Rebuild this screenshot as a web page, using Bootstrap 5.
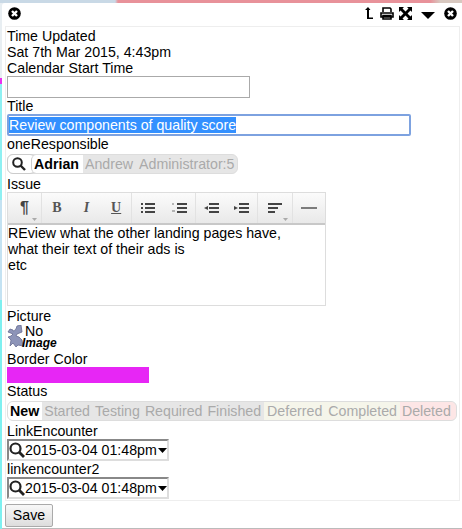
<!DOCTYPE html>
<html lang="en">
<head>
    <meta charset="UTF-8">
    <meta name="viewport" content="width=device-width, initial-scale=1">
    <link href="https://cdn.jsdelivr.net/npm/bootstrap@5.3.2/dist/css/bootstrap.min.css" rel="stylesheet">
    <script src="https://cdn.jsdelivr.net/npm/bootstrap@5.3.2/dist/js/bootstrap.bundle.min.js"></script>
    <title>Edit Task</title>
    <style>
        html, body { height: 100%; }
        body {
            overflow: hidden;
            font: 14.2px/16px "Liberation Sans", Arial, sans-serif;
            color: #000;
            background:
                linear-gradient(to right, #c9d9e6 0, #c9d9e6 115px, #e8929a 118px, #e8929a 430px, #d8c8c0 440px) 0 0 / 100% 3px no-repeat,
                linear-gradient(#e8eef2 0, #e8eef2 78px, #ea30ee 78px, #ea30ee 84px, #8ef0f2 84px, #8ef0f2 200px, #c4e2f2 200px, #c4e2f2 300px, #7ef0f0 300px, #7ef0f0 529px);
        }
        .dlg { margin: 3px 0 0 2px; height: 526px; background: #fff; border-bottom: 1px solid #bbb; border-top-left-radius: 3px; }
        .dlg-bar { height: 23px; padding: 0 5px 3px 6px; }
        .dlg-bar svg { display: block; }
        .gap-print { margin-left: 7px; }
        .gap-expand { margin-left: 5px; }
        .gap-caret { margin: 5px 0 0 9px; }
        .gap-close { margin-left: 9px; }
        .dlg-body { margin: 0 2px 0 3px; height: 475px; border: 1px solid #eee; padding: 1px 1px 0; }
        .fld { height: 22px; border: 1px solid #aaa; padding: 0 2px; display: block; }
        .fld-time { width: 243px; }
        .fld-title { width: 404px; border: 2px solid #7da2e0; border-radius: 2px; padding: 1px 0; display: flex; align-items: center; }
        .fld-title span { background: #3390ff; color: #fff; line-height: 16px; }
        .pills { display: flex; width: fit-content; height: 20px; margin: 2px 0; background: #e6e6e6; border: 1px solid #ddd; border-radius: 6px; color: #aaa; white-space: nowrap; }
        .pills span { padding: 0 3px 0 2px; line-height: 18px; }
        .pills .pill-on { background: #fff; color: #000; font-weight: 700; }
        .pills .pill-who { margin-left: -5px; padding: 0 4px 0 2px; border-left: 1px solid #ccc; border-radius: 5px 0 0 5px; }
        .pills .pill-ic { background: #fff; border: 1px solid #ccc; border-radius: 6px; width: 29px; padding: 0 5px 0 0; margin: -1px 0 -1px -1px; display: flex; align-items: center; justify-content: center; }
        .pills .pill-gap { padding-right: 4px; }
        .pills .pill-beige { background: #f5f5ea; padding: 0 3px; }
        .pills .pill-red { background: #fde6e6; }
        .pills .pill-first { padding: 0 3px 0 2px; border-radius: 5px 0 0 5px; }
        .pills .pill-last { border-radius: 0 5px 5px 0; padding-right: 5px; }
        .ed { width: 319px; height: 114px; border: 1px solid #ddd; }
        .ed-bar { height: 32px; display: flex; background: linear-gradient(#fbfbfb, #e9e9e9); border-bottom: 2px solid #c8c8c8; }
        .ed-grp { display: flex; align-items: center; justify-content: space-around; border-right: 1px solid #e2e2e2; height: 30px; color: #444; position: relative; }
        .ed-b { width: 28px; text-align: center; font: 700 14px/16px "Liberation Serif", serif; color: #555; }
        .ed-para { font: 700 16px/16px "Liberation Sans", sans-serif; color: #444; }
        .ed-caret { position: absolute; right: 4px; bottom: 2px; width: 5px; height: 3px; }
        .w-para { width: 34px; }
        .w-font { width: 90px; }
        .w-list { width: 64px; }
        .w-indent { width: 62px; }
        .w-align { width: 35px; }
        .w-rule { width: 32px; border-right: 0; }
        .ed-txt { line-height: 16px; }
        .lbl-pic { margin-top: 2px; }
        .no-img { display: flex; height: 27px; }
        .no-img svg { margin-top: 1px; }
        .no-img-t { padding-left: 1px; line-height: 14px; }
        .no-img-t i { display: block; margin-left: -3px; font-size: 12px; font-weight: 700; line-height: 10px; }
        .swatch { width: 142px; height: 16px; background: #e726f5; }
        .lookup { width: 162px; height: 22px; border: 2px solid #888; border-right-color: #ddd; border-bottom-color: #ddd; display: flex; align-items: center; white-space: nowrap; padding-left: 0; }
        .lookup svg { flex-shrink: 0; }
        .lookup .lookup-caret { margin-left: 1px; }
        .btn-save { font: 14.2px/16px "Liberation Sans", Arial, sans-serif; width: 48px; padding: 2px 0 3px; height: 23px; color: #000; background: linear-gradient(#f8f8f8, #ddd); border: 1px solid #aaa; border-radius: 2px; }
        .save-row { margin: 3px 0 0 3px; }
    </style>
</head>
<body>
<div class="dlg">
    <div class="dlg-bar d-flex align-items-center">
        <svg width="13" height="13" viewBox="0 0 13 13"><circle cx="6.5" cy="6.5" r="6.300" fill="#000"/><path d="M4 4l5 5M9 4l-5 5" stroke="#fff" stroke-width="2.400"/></svg>
        <div class="ms-auto d-flex align-items-center">
            <svg width="9" height="13" viewBox="0 0 9 13"><path d="M3 12V3H1L4 0 6.500 3H5V10.500H9V12Z" fill="#000"/></svg>
            <svg class="gap-print" width="14" height="13" viewBox="0 0 14 13"><path d="M3 5V1h7l1 1v3M1 6h12v4H1zM3 8.500h8V12H3z" fill="#fff" stroke="#000" stroke-width="1.600"/></svg>
            <svg class="gap-expand" width="13" height="13" viewBox="0 0 13 13"><path d="M0 0h5L3.500 1.500 6.500 4.500 9.500 1.500 8 0h5v5L11.500 3.500 8.500 6.500 11.500 9.500 13 8v5H8L9.500 11.500 6.500 8.500 3.500 11.500 5 13H0V8L1.500 9.500 4.500 6.500 1.500 3.500 0 5Z" fill="#000"/></svg>
            <svg class="gap-caret" width="14" height="7" viewBox="0 0 14 7"><path d="M0 0h14L7 7Z" fill="#000"/></svg>
            <svg class="gap-close" width="13" height="13" viewBox="0 0 13 13"><circle cx="6.5" cy="6.5" r="6.300" fill="#000"/><path d="M4 4l5 5M9 4l-5 5" stroke="#fff" stroke-width="2.400"/></svg>
        </div>
    </div>
    <div class="dlg-body">
        <div>Time Updated</div>
        <div>Sat 7th Mar 2015, 4:43pm</div>
        <div>Calendar Start Time</div>
        <div class="fld fld-time"></div>
        <div>Title</div>
        <div class="fld fld-title"><span>Review components of quality score</span></div>
        <div>oneResponsible</div>
        <div class="pills">
            <span class="pill-ic"><svg width="14" height="14" viewBox="0 0 14 14"><circle cx="5.500" cy="5.500" r="4.300" fill="none" stroke="#222" stroke-width="2"/><path d="M8.500 8.500L13 13" stroke="#222" stroke-width="2.400"/></svg></span>
            <span class="pill-on pill-who">Adrian</span><span class="pill-gap">Andrew</span><span>Administrator:5</span>
        </div>
        <div>Issue</div>
        <div class="ed">
            <div class="ed-bar">
                <div class="ed-grp w-para"><span class="ed-para">¶</span><svg class="ed-caret" viewBox="0 0 5 3"><path d="M0 0h5L2.500 3Z" fill="#aaa"/></svg></div>
                <div class="ed-grp w-font"><span class="ed-b">B</span><span class="ed-b fst-italic">I</span><span class="ed-b text-decoration-underline">U</span></div>
                <div class="ed-grp w-list">
                    <svg width="14" height="10" viewBox="0 0 14 10"><path d="M0 1h2M4 1h10M0 5h2M4 5h10M0 9h2M4 9h10" stroke="#444" stroke-width="2"/></svg>
                    <svg width="15" height="10" viewBox="0 0 15 10"><path d="M5 1h10M5 5h10M5 9h10" stroke="#444" stroke-width="2"/><path d="M0 1h2M0 8h3" stroke="#777"/></svg>
                </div>
                <div class="ed-grp w-indent">
                    <svg width="15" height="10" viewBox="0 0 15 10"><path d="M5 1h10M5 5h10M5 9h10" stroke="#444" stroke-width="2"/><path d="M4 3v4L0 5Z" fill="#444"/></svg>
                    <svg width="15" height="10" viewBox="0 0 15 10"><path d="M5 1h10M5 5h10M5 9h10" stroke="#444" stroke-width="2"/><path d="M0 3v4l4-2Z" fill="#444"/></svg>
                </div>
                <div class="ed-grp w-align">
                    <svg width="15" height="10" viewBox="0 0 15 10"><path d="M0 1h14M0 5h10M0 9h7" stroke="#444" stroke-width="2"/></svg>
                    <svg class="ed-caret" viewBox="0 0 5 3"><path d="M0 0h5L2.500 3Z" fill="#aaa"/></svg>
                </div>
                <div class="ed-grp w-rule">
                    <svg width="16" height="2" viewBox="0 0 16 2"><path d="M0 1h16" stroke="#555" stroke-width="1.500"/></svg>
                </div>
            </div>
            <div class="ed-txt">REview what the other landing pages have,<br>what their text of their ads is<br>etc</div>
        </div>
        <div class="lbl-pic">Picture</div>
        <div class="no-img">
            <svg width="17" height="24" viewBox="0 0 17 24"><path d="M6 5C7 8 8 4 9 4L10 1 14 0 15 7 10 9 9 11 12 12 15 15 16 21 11 20 9 22 6 18 3 21 4 15 1 12 4 11 6 9 1 7 3 4Z" fill="#8d94b8" stroke="#666b90" stroke-width=".8"/></svg>
            <div class="no-img-t">No<i>Image</i></div>
        </div>
        <div>Border Color</div>
        <div class="swatch"></div>
        <div>Status</div>
        <div class="pills">
            <span class="pill-on pill-first">New</span><span>Started</span><span>Testing</span><span>Required</span><span>Finished</span><span class="pill-beige">Deferred</span><span class="pill-beige">Completed</span><span class="pill-red pill-last">Deleted</span>
        </div>
        <div>LinkEncounter</div>
        <div class="lookup">
            <svg width="16" height="16" viewBox="0 0 16 16"><circle cx="6.500" cy="6.500" r="5" fill="none" stroke="#222" stroke-width="2.200"/><path d="M10 10L15 15" stroke="#222" stroke-width="2.800"/></svg>
            <span>2015-03-04 01:48pm</span>
            <svg class="lookup-caret" width="9" height="5" viewBox="0 0 9 5"><path d="M0 0h9L4.500 5Z" fill="#000"/></svg>
        </div>
        <div>linkencounter2</div>
        <div class="lookup">
            <svg width="16" height="16" viewBox="0 0 16 16"><circle cx="6.500" cy="6.500" r="5" fill="none" stroke="#222" stroke-width="2.200"/><path d="M10 10L15 15" stroke="#222" stroke-width="2.800"/></svg>
            <span>2015-03-04 01:48pm</span>
            <svg class="lookup-caret" width="9" height="5" viewBox="0 0 9 5"><path d="M0 0h9L4.500 5Z" fill="#000"/></svg>
        </div>
    </div>
    <div class="save-row"><button type="button" class="btn btn-save">Save</button></div>
</div>
</body>
</html>
